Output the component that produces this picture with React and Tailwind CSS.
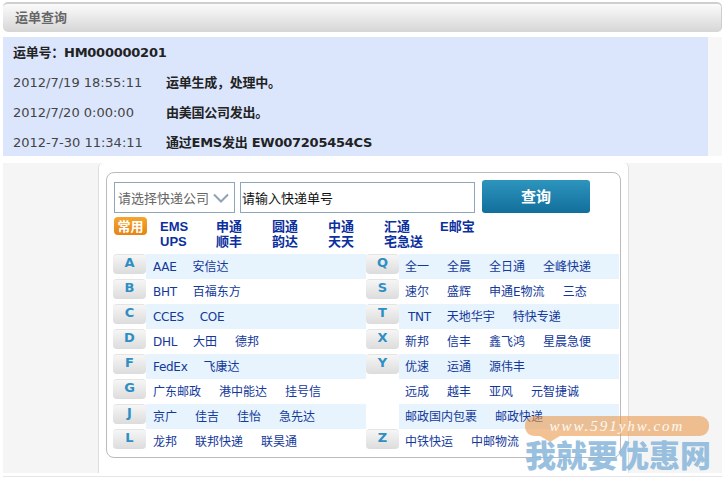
const V = '"DejaVu Sans","Noto Sans CJK SC",sans-serif';
const CJK = '"Noto Sans CJK SC",sans-serif';
const LIB = '"Liberation Sans","Noto Sans CJK SC",sans-serif';

const left = [
  ['A', ['AAE', '安信达']],
  ['B', ['BHT', '百福东方']],
  ['C', ['CCES', 'COE']],
  ['D', ['DHL', '大田', '德邦']],
  ['F', ['FedEx', '飞康达']],
  ['G', ['广东邮政', '港中能达', '挂号信']],
  ['J', ['京广', '佳吉', '佳怡', '急先达']],
  ['L', ['龙邦', '联邦快递', '联昊通']],
];
const right = [
  ['Q', ['全一', '全晨', '全日通', '全峰快递']],
  ['S', ['速尔', '盛辉', '申通E物流', '三态']],
  ['T', ['TNT', '天地华宇', '特快专递']],
  ['X', ['新邦', '信丰', '鑫飞鸿', '星晨急便']],
  ['Y', ['优速', '运通', '源伟丰']],
  ['', ['远成', '越丰', '亚风', '元智捷诚']],
  ['', ['邮政国内包裹', '邮政快递']],
  ['Z', ['中铁快运', '中邮物流']],
];
const common = ['EMS', '申通', '圆通', '中通', '汇通', 'E邮宝', 'UPS', '顺丰', '韵达', '天天', '宅急送'];

function itemClass(t) {
  if (t === 'TNT') return 'ml-[3px] mr-[-2px] tracking-[-0.3px] whitespace-nowrap';
  if (/^[A-Za-z]+$/.test(t)) return 'mr-[-2px] tracking-[-0.3px] whitespace-nowrap';
  return 'whitespace-nowrap';
}

function Row({ letter, items, striped, side }) {
  return (
    <div className="flex h-[25px]">
      <div className="w-[33px] shrink-0">
        {letter && (
          <div className="h-[20px] rounded-[4px] border-t border-[#e4e4e4] bg-gradient-to-b from-[#f6f6f6] to-[#dcdcdc] text-center text-[13px] leading-[16px] font-bold text-[#2f8fc4]">
            {letter}
          </div>
        )}
      </div>
      <div className={`flex flex-1 items-center gap-[18px] text-[12px] text-[#12389a] ${side === 'r' ? 'pl-[6px]' : 'pl-[7px]'} ${striped ? 'bg-[#e8f4fd]' : ''}`}>
        {items.map((t) => (
          <span key={t} className={itemClass(t)}>{t}</span>
        ))}
      </div>
    </div>
  );
}

export default function App() {
  return (
    <div className="relative h-[479px] w-[724px] overflow-hidden bg-white pt-[2px] pr-[2px] pl-[3px]" style={{ fontFamily: V }}>
      <div className="flex h-[30px] items-center rounded-[5px] border-t-2 border-r border-[#cfcfcf] bg-gradient-to-b from-[#fbfbfb] to-[#d6d6d6] pl-[12px] text-[13px] font-bold text-[#666]">
        运单查询
      </div>

      <div className="mt-[5px] flex h-[119px] bg-[#f7f7f7]">
        <div className="w-[705px] bg-[#dbe6fd] pl-[10px] text-[13px] text-[#333]">
          <div className="flex h-[31px] items-center font-bold tracking-[-0.25px] text-[#222]">运单号：HM000000201</div>
          {[
            ['2012/7/19 18:55:11', '运单生成，处理中。'],
            ['2012/7/20 0:00:00', '由美国公司发出。'],
            ['2012-7-30 11:34:11', '通过EMS发出 EW007205454CS'],
          ].map(([t, m]) => (
            <div key={t} className="flex h-[30px] items-center">
              <span className="w-[153px] shrink-0 text-[#444]">{t}</span>
              <span className="font-bold tracking-[-0.25px] text-[#222]">{m}</span>
            </div>
          ))}
        </div>
      </div>

      <div className="mt-[7px] flex h-[310px] bg-[#f5f5f5] pl-[95px]">
        <div className="h-full w-[531px] rounded-t-[5px] border-x border-[#dedede] bg-white px-[7px] pt-[9px]">
          <div className="h-[286px] rounded-[8px] border border-[#bbbbbb] pt-[8px] pr-[6px] pl-[7px]">
            <div className="flex items-start">
              <div className="mt-[1px] flex h-[31px] w-[121px] items-center justify-between border border-[#8fa6b8] pr-[5px] pl-[3px] text-[13px] text-[#666]" style={{ fontFamily: CJK }}>
                <span className="whitespace-nowrap">请选择快递公司</span>
                <svg width="16" height="10" viewBox="0 0 16 10" fill="none" className="shrink-0">
                  <path d="M1 1.5 L8 8.5 L15 1.5" stroke="#8fa3b3" strokeWidth="2" />
                </svg>
              </div>
              <div className="mt-[1px] ml-[5px] flex h-[31px] w-[235px] items-center border border-[#8fa6b8] pl-[1px] text-[13px] text-[#111]" style={{ fontFamily: CJK }}>
                请输入快递单号
              </div>
              <button className="ml-[7px] h-[33px] w-[108px] -translate-y-[1px] rounded-[3px] bg-gradient-to-b from-[#2d95bd] to-[#116f9c] text-[15px] font-bold text-white" style={{ fontFamily: CJK }}>
                查询
              </button>
            </div>

            <div className="mt-[3px] flex h-[37px]">
              <div className="h-[18px] w-[33px] rounded-[4px] bg-gradient-to-b from-[#f5a52f] to-[#e58412] text-center text-[13px] leading-[18px] font-bold text-white" style={{ fontFamily: CJK }}>
                常用
              </div>
              <div className="ml-[13px] grid grid-cols-[repeat(6,56px)] content-start pt-[2px] text-[13px] leading-[15px] font-bold text-[#0c2f9e]" style={{ fontFamily: LIB }}>
                {common.map((c) => (
                  <span key={c} className="whitespace-nowrap">{c}</span>
                ))}
              </div>
            </div>

            <div className="-ml-[1px] grid w-[506px] grid-cols-[253px_253px]">
              <div className="flex flex-col">
                {left.map(([l, it], i) => (
                  <Row key={l} letter={l} items={it} striped={i % 2 === 0} side="l" />
                ))}
              </div>
              <div className="flex flex-col">
                {right.map(([l, it], i) => (
                  <Row key={i} letter={l} items={it} striped={i % 2 === 0} side="r" />
                ))}
              </div>
            </div>
          </div>
        </div>
      </div>

      <div className="mt-[3px] h-px bg-[#e6e6e6]" />

      <div className="absolute top-[416px] left-[525px] h-[20px] w-[184px] rounded-[9px] bg-[#e9994f]/60 text-center text-[15px] leading-[20px] tracking-[2px] text-white/90 italic" style={{ fontFamily: '"Liberation Serif",serif' }}>
        www.591yhw.com
      </div>
      <div className="absolute top-[436px] left-[540px] h-0 w-0 border-x-[10px] border-t-[6px] border-x-transparent border-t-[#e9994f]/60" />
      <div className="absolute top-[434px] left-[525px] text-[31px] leading-[40px] font-black whitespace-nowrap text-[#8cb8dc]/90" style={{ fontFamily: CJK }}>
        我就要优惠网
      </div>
    </div>
  );
}
